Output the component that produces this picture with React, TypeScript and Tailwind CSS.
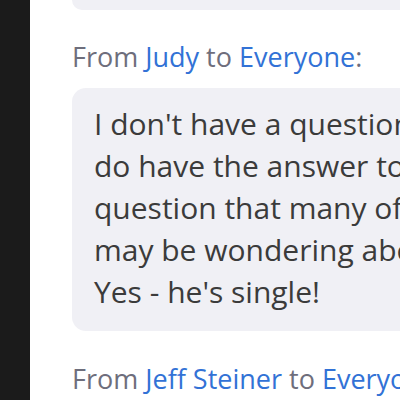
import React from 'react';

const messages = [
  {
    from: 'Judy',
    to: 'Everyone',
    lines: [
      "I don't have a question, but I",
      'do have the answer to a',
      'question that many of you',
      'may be wondering about...',
      "Yes - he's single!",
    ],
  },
];

const Header: React.FC<{ from: string; to: string }> = ({ from, to }) => (
  <div className="text-[27px] leading-[34px] text-[#6e6e7c] whitespace-nowrap">
    From <span className="text-[#3272d6]">{from}</span> to{' '}
    <span className="text-[#3272d6]">{to}</span>:
  </div>
);

export default function App() {
  return (
    <div
      className="flex w-[400px] h-[400px] overflow-hidden bg-white"
      style={{ fontFamily: '"Open Sans", "Noto Sans", sans-serif' }}
    >
      <div className="w-[30px] shrink-0 bg-[#1b1b1b]" />
      <div className="flex-1 pl-[42px] overflow-hidden">
        {/* tail of the previous message */}
        <div className="h-[10px] w-[400px] rounded-b-[14px] bg-[#f0f0f5]" />

        {messages.map((m, i) => (
          <div key={i}>
            <div className="mt-[30px]">
              <Header from={m.from} to={m.to} />
            </div>
            <div className="mt-[14px] w-[400px] rounded-[14px] bg-[#f0f0f5] pl-[22px] pt-[15px] pb-[18px]">
              {m.lines.map((l, j) => (
                <div key={j} className="text-[30px] leading-[42px] text-[#3b3b3b] whitespace-nowrap">
                  {l}
                </div>
              ))}
            </div>
          </div>
        ))}

        <div className="mt-[31px]">
          <Header from="Jeff Steiner" to="Everyone" />
        </div>
      </div>
    </div>
  );
}
